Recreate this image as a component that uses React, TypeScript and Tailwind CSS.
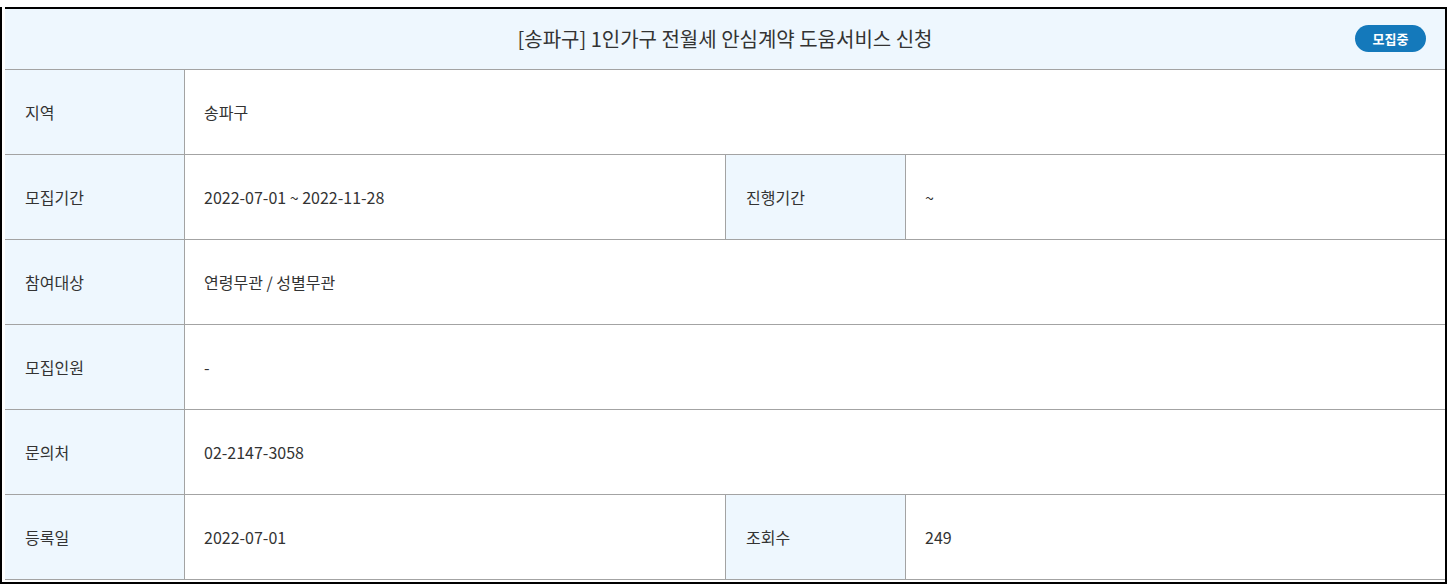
import React from 'react';

const FONT = '"Noto Sans CJK KR", "Noto Sans", sans-serif';

type Cell = { label: string; value: string };

const rows: Cell[][] = [
  [{ label: '지역', value: '송파구' }],
  [
    { label: '모집기간', value: '2022-07-01 ~ 2022-11-28' },
    { label: '진행기간', value: '~' },
  ],
  [{ label: '참여대상', value: '연령무관 / 성별무관' }],
  [{ label: '모집인원', value: '-' }],
  [{ label: '문의처', value: '02-2147-3058' }],
  [
    { label: '등록일', value: '2022-07-01' },
    { label: '조회수', value: '249' },
  ],
];

const Label: React.FC<{ children: React.ReactNode }> = ({ children }) => (
  <div className="flex items-center h-[84px] pl-5 bg-[#eef7fe] border-r border-[#a3a3a3] text-[16px] text-[#333]">
    {children}
  </div>
);

const Value: React.FC<{ children: React.ReactNode; span?: boolean; divider?: boolean }> = ({ children, span, divider }) => (
  <div
    className={
      'flex items-center h-[84px] pl-[19px] text-[16px] text-[#333] ' +
      (span ? 'col-span-3 ' : '') +
      (divider ? 'border-r border-[#a3a3a3]' : '')
    }
  >
    {children}
  </div>
);

export default function App() {
  return (
    <div className="bg-white w-[1448px] h-[585px] pt-[7px]" style={{ fontFamily: FONT }}>
      <div className="w-[1447px] border-l-2 border-r-2 border-b-2 border-black pl-[3px] pb-[2px]">
        <div className="w-[1440px] border-t-2 border-black">
          <div className="relative flex items-center justify-center h-[61px] bg-[#eef7fe] border-b border-[#a3a3a3]">
            <h2 className="text-[20px] text-[#333]">[송파구] 1인가구 전월세 안심계약 도움서비스 신청</h2>
            <span className="absolute right-[19px] top-[16px] flex items-center justify-center w-[71px] h-[27px] rounded-full bg-[#1479bb] text-white text-[13px] font-bold">
              모집중
            </span>
          </div>
          {rows.map((row, i) => (
            <div key={i} className="grid grid-cols-[180px_541px_180px_1fr] border-b border-[#a3a3a3]">
              {row.length === 1 ? (
                <>
                  <Label>{row[0].label}</Label>
                  <Value span>{row[0].value}</Value>
                </>
              ) : (
                <>
                  <Label>{row[0].label}</Label>
                  <Value divider>{row[0].value}</Value>
                  <Label>{row[1].label}</Label>
                  <Value>{row[1].value}</Value>
                </>
              )}
            </div>
          ))}
        </div>
      </div>
    </div>
  );
}
